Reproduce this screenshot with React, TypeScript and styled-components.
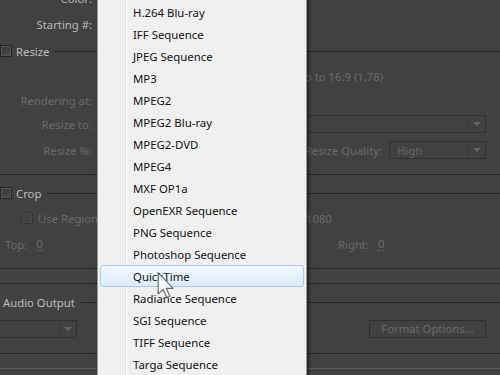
import styled, { createGlobalStyle } from 'styled-components';

const GlobalStyle = createGlobalStyle`
  html, body {
    margin: 0;
    padding: 0;
    background: #414141;
  }
  body {
    font-family: "Noto Sans", "Liberation Sans", sans-serif;
  }
`;

const formats = [
  'H.264',
  'H.264 Blu-ray',
  'IFF Sequence',
  'JPEG Sequence',
  'MP3',
  'MPEG2',
  'MPEG2 Blu-ray',
  'MPEG2-DVD',
  'MPEG4',
  'MXF OP1a',
  'OpenEXR Sequence',
  'PNG Sequence',
  'Photoshop Sequence',
  'QuickTime',
  'Radiance Sequence',
  'SGI Sequence',
  'TIFF Sequence',
  'Targa Sequence',
  'Waveform Audio',
];

export const App: React.FC = (): JSX.Element => {
  return (
    <Screen>
      <GlobalStyle />
      <Panel>
        <Row $h={24}>
          <Label>Color:</Label>
        </Row>
        <Row $h={28}>
          <Label>Starting #:</Label>
        </Row>

        <SectionHeader $h={26}>
          <Checkbox />
          <SectionTitle>Resize</SectionTitle>
          <Rule />
        </SectionHeader>
        <Row $h={24}>
          <Side />
          <Note $indent={5}>o to 16:9 (1,78)</Note>
        </Row>
        <Row $h={24}>
          <Label $dim>Rendering at:</Label>
        </Row>
        <Row $h={24}>
          <Label $dim>Resize to:</Label>
          <Dropdown $grow>
            <DropValue />
            <DropArrow />
          </Dropdown>
        </Row>
        <Row $h={28}>
          <Label $dim>Resize %:</Label>
          <Spacer />
          <Note>Resize Quality:</Note>
          <Dropdown $width={97}>
            <DropValue>High</DropValue>
            <DropArrow />
          </Dropdown>
        </Row>
        <Gap $h={10} />
        <Divider />

        <SectionHeader $h={36}>
          <Checkbox />
          <SectionTitle>Crop</SectionTitle>
          <Rule />
        </SectionHeader>
        <Row $h={14}>
          <Side>
            <SubCheck />
            <Note>Use Region</Note>
          </Side>
          <Note>: 1080</Note>
        </Row>
        <Row $h={38}>
          <Side>
            <Note $indent={5}>Top:</Note>
            <Value $gap={9}>0</Value>
          </Side>
          <Note $indent={38}>Right:</Note>
          <Value $gap={9}>0</Value>
        </Row>
        <Gap $h={5} />
        <Divider />
        <Gap $h={14} />
        <Divider />

        <SectionHeader $h={36}>
          <SectionTitle $plain>Audio Output</SectionTitle>
          <Rule />
        </SectionHeader>
        <Row $h={18}>
          <Dropdown $width={87} $shift={-10}>
            <DropValue />
            <DropArrow />
          </Dropdown>
          <Dropdown $width={120} $shift={10}>
            <DropValue />
          </Dropdown>
          <Spacer />
          <Button>Format Options...</Button>
        </Row>
        <Gap $h={15} />
        <Divider />
        <Gap $h={14} />
        <Divider $light />
      </Panel>

      <Menu>
        {formats.map((name) => (
          <MenuItem key={name} $active={name === 'QuickTime'}>
            {name}
          </MenuItem>
        ))}
      </Menu>

      <Cursor width="20" height="27" viewBox="0 0 12 19">
        <path
          d="M0.5 0.5 L0.5 15.5 L4 12.2 L6.6 18 L8.7 17.1 L6.2 11.5 L11 11.5 Z"
          fill="rgba(255,255,255,0.85)"
          stroke="rgba(60,60,60,0.75)"
          strokeWidth="0.8"
          strokeLinejoin="round"
        />
      </Cursor>
    </Screen>
  );
};

const Screen = styled.div`
  position: relative;
  width: 500px;
  height: 375px;
  overflow: hidden;
  background: #414141;
  font-size: 11.3px;
`;

const Panel = styled.div`
  display: flex;
  flex-direction: column;
  margin-top: -14px;
`;

const Row = styled.div<{ $h: number }>`
  display: flex;
  align-items: center;
  height: ${(p) => p.$h}px;
  flex-shrink: 0;
`;

const Side = styled.div`
  display: flex;
  align-items: center;
  width: 300px;
  flex-shrink: 0;
  overflow: hidden;
`;

const Label = styled.div<{ $dim?: boolean }>`
  width: 92px;
  text-align: right;
  white-space: nowrap;
  color: ${(p) => (p.$dim ? '#6b6b6b' : '#b9b9b9')};
`;

const Note = styled.span<{ $indent?: number }>`
  margin-left: ${(p) => p.$indent ?? 0}px;
  white-space: nowrap;
  color: #6b6b6b;
`;

const Value = styled.span<{ $gap: number }>`
  margin-left: ${(p) => p.$gap}px;
  color: #6b6b6b;
  border-bottom: 1px dotted #6b6b6b;
  line-height: 13px;
`;

const Spacer = styled.div`
  flex: 1;
`;

const Gap = styled.div<{ $h: number }>`
  height: ${(p) => p.$h}px;
  flex-shrink: 0;
`;

const Divider = styled.div<{ $light?: boolean }>`
  height: 1px;
  flex-shrink: 0;
  background: ${(p) => (p.$light ? '#5a5a5a' : '#282828')};
`;

const SectionHeader = styled(Row)`
  gap: 4px;
`;

const Checkbox = styled.div`
  width: 10px;
  height: 10px;
  border: 1px solid #262626;
  background: linear-gradient(#3a3a3a, #474747);
  box-shadow: inset 0 0 0 1px #555;
  flex-shrink: 0;
`;

const SubCheck = styled(Checkbox)`
  margin: 0 5px 0 21px;
  border-color: #363636;
  box-shadow: inset 0 0 0 1px #484848;
  background: #414141;
`;

const SectionTitle = styled.span<{ $plain?: boolean }>`
  color: #bdbdbd;
  margin-left: ${(p) => (p.$plain ? 3 : 0)}px;
  white-space: nowrap;
`;

const Rule = styled.div`
  flex: 1;
  height: 1px;
  margin-left: 2px;
  background: #252525;
`;

const Dropdown = styled.div<{ $grow?: boolean; $width?: number; $shift?: number }>`
  display: flex;
  align-items: center;
  box-sizing: border-box;
  height: 18px;
  ${(p) => (p.$grow ? 'flex: 1;' : `width: ${p.$width}px;`)}
  margin-left: ${(p) => (p.$grow ? 8 : p.$shift ?? 7)}px;
  margin-right: 14px;
  border: 1px solid #303030;
  background: #414141;
  color: #666;
`;

const DropValue = styled.span`
  flex: 1;
  padding-left: 7px;
`;

const DropArrow = styled.span`
  display: flex;
  align-items: center;
  justify-content: center;
  width: 16px;
  height: 12px;
  border-left: 1px solid #363636;
  &::after {
    content: '';
    border-left: 4px solid transparent;
    border-right: 4px solid transparent;
    border-top: 4px solid #666;
  }
`;

const Button = styled.div`
  box-sizing: border-box;
  width: 117px;
  height: 18px;
  margin-right: 14px;
  border: 1px solid #2f2f2f;
  color: #6b6b6b;
  text-align: center;
  line-height: 16px;
`;

const Menu = styled.div`
  position: absolute;
  left: 97px;
  top: -22px;
  width: 208px;
  display: flex;
  flex-direction: column;
  border: 1px solid #979797;
  background: linear-gradient(
    to right,
    #f0f0f0 27px,
    #e2e3e3 27px,
    #e2e3e3 28px,
    #ffffff 28px,
    #ffffff 29px,
    #f0f0f0 29px
  );
  box-shadow: 2px 2px 3px rgba(0, 0, 0, 0.45);
  font-family: "Noto Sans", "Liberation Sans", sans-serif;
`;

const MenuItem = styled.div<{ $active?: boolean }>`
  box-sizing: border-box;
  height: 22px;
  margin: 0 2px;
  padding-left: 32px;
  display: flex;
  align-items: center;
  color: #111;
  font-size: 11.4px;
  border: 1px solid ${(p) => (p.$active ? '#a9cdf2' : 'transparent')};
  border-radius: 3px;
  background: ${(p) => (p.$active ? 'linear-gradient(#f2f7fe, #dcebfc)' : 'transparent')};
`;

const Cursor = styled.svg`
  position: absolute;
  left: 156px;
  top: 272px;
`;

export default App;
